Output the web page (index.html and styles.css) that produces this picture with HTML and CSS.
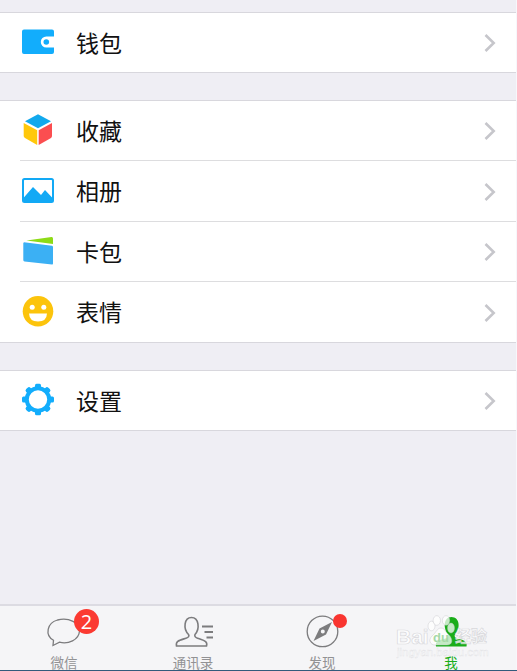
FILE: index.html
```html
<!DOCTYPE html>
<html lang="zh-CN">
<head>
<meta charset="utf-8">
<title>我</title>
<link rel="stylesheet" href="styles.css">
</head>
<body>
<div class="app">
  <main class="settings">
    <section class="group">
      <div class="row">
        <svg class="icon" viewBox="0 0 34 34"><path fill="#12adfc" d="M3 4.500H31Q33 4.500 33 6.500V11.500H25.300a5.500 5.500 0 0 0 0 11H33V27Q33 29 31 29H3Q1 29 1 27V6.500Q1 4.500 3 4.500Z"/><circle cx="25.300" cy="17" r="2.800" fill="#12adfc"/></svg>
        <span class="label">钱包</span>
        <svg class="chevron" viewBox="0 0 12 20"><path d="M1.500 2 9.700 10 1.500 18"/></svg>
      </div>
    </section>
    <section class="group">
      <div class="row">
        <svg class="icon" viewBox="0 0 34 34"><path fill="#12a9ed" d="M17 1.300 30 8.300 17 15.300 4 8.300Z"/><path fill="#ffc80b" d="M2.700 10 16.200 17.300V32L4 25Q2.700 24.200 2.700 23Z"/><path fill="#fb4e50" d="M31 10 17.700 17.300V32L30 25Q31 24.200 31 23Z"/></svg>
        <span class="label">收藏</span>
        <svg class="chevron" viewBox="0 0 12 20"><path d="M1.500 2 9.700 10 1.500 18"/></svg>
      </div>
      <div class="row">
        <svg class="icon" viewBox="0 0 34 34"><rect x="2" y="5" width="30" height="23" rx="1.500" fill="#fff" stroke="#12a9f5" stroke-width="2"/><path fill="#12a9f5" d="M2 24.500 12 13 20 21 24 16 32 24.500V28H2Z"/></svg>
        <span class="label">相册</span>
        <svg class="chevron" viewBox="0 0 12 20"><path d="M1.500 2 9.700 10 1.500 18"/></svg>
      </div>
      <div class="row">
        <svg class="icon" viewBox="0 0 34 34"><path fill="#8edb16" d="M5.500 5.500 30.500 2Q32 1.800 32 3.500V9Z"/><path fill="#3bb0f4" d="M3 7.300 31 10.800Q32 11 32 12V28.500Q32 29.700 31 29.500L3.500 26.500Q2.300 26.300 2.300 25V8Z"/></svg>
        <span class="label">卡包</span>
        <svg class="chevron" viewBox="0 0 12 20"><path d="M1.500 2 9.700 10 1.500 18"/></svg>
      </div>
      <div class="row">
        <svg class="icon" viewBox="0 0 34 34"><circle cx="17" cy="16.300" r="15.300" fill="#fcc40c"/><circle cx="11.200" cy="12.300" r="2.500" fill="#fff"/><circle cx="22.800" cy="12.300" r="2.500" fill="#fff"/><path fill="#fff" d="M8 18.500H26Q25.700 26.500 17 26.500T8 18.500Z"/></svg>
        <span class="label">表情</span>
        <svg class="chevron" viewBox="0 0 12 20"><path d="M1.500 2 9.700 10 1.500 18"/></svg>
      </div>
    </section>
    <section class="group">
      <div class="row">
        <svg class="icon" viewBox="0 0 34 34"><g fill="#12adfc"><rect x="14" y=".8" width="6" height="31.400" rx="1.500"/><rect x="1" y="13.500" width="32" height="6" rx="1.500"/><rect x="14" y=".8" width="6" height="31.400" rx="2" transform="rotate(45 17 16.500)"/><rect x="14" y=".8" width="6" height="31.400" rx="2" transform="rotate(-45 17 16.500)"/></g><circle cx="17" cy="16.500" r="11.200" fill="#fff" stroke="#12adfc" stroke-width="4"/></svg>
        <span class="label">设置</span>
        <svg class="chevron" viewBox="0 0 12 20"><path d="M1.500 2 9.700 10 1.500 18"/></svg>
      </div>
    </section>
  </main>
  <nav class="tabs">
    <div class="tab">
      <svg class="tab-icon" viewBox="0 0 44 36"><path d="M10.500 28.300C1.500 23 4 11 14.500 8C26 5 37 11 36.500 19C36 28 25 32.500 16.500 30.200L10 33.500Z"/></svg>
      <span class="tab-label">微信</span>
      <span class="badge">2</span>
    </div>
    <div class="tab">
      <svg class="tab-icon people" viewBox="0 0 44 36"><path d="M4.500 34H34.500C36 29 32 28.500 25.500 26.200Q22 25 23 22.500C28 17 27 5.500 19.500 5.500S11 17 16.500 22.500Q18 25 14 26.200C7 28.500 3.500 29 4.500 34Z"/><path stroke-width="2" d="M30 14.500H41M32.500 20H41M34.500 25.500H41"/></svg>
      <span class="tab-label">通讯录</span>
    </div>
    <div class="tab">
      <svg class="tab-icon" viewBox="0 0 44 36"><circle cx="21.500" cy="19.400" r="15.300"/><path fill="#7c7c7e" stroke="none" fill-rule="evenodd" d="M31 10 25 22.500 12.500 29 18.500 16.500ZM21.800 17.600a2 2 0 1 0 0 4 2 2 0 0 0 0-4Z"/></svg>
      <span class="tab-label">发现</span>
      <span class="dot"></span>
    </div>
    <div class="tab active">
      <svg class="tab-icon" viewBox="0 0 44 36"><path d="M6 34.500H36.500C37.500 29 34.500 28.500 27.500 26.500Q23.500 25 25 22.500C31 16 29.500 5 21.500 5S13 16 18 22.500Q19.500 25 15.500 26.500C8.500 28.500 5 29 6 34.500Z"/></svg>
      <span class="tab-label">我</span>
    </div>
  </nav>
  <div class="watermark">
    <div class="brand">
      <span class="bai">Bai</span>
      <span class="paw-box"><svg class="paw" viewBox="0 0 28 32"><ellipse cx="4.500" cy="12" rx="3.500" ry="4.800"/><ellipse cx="9.800" cy="6.500" rx="3.700" ry="4.800"/><ellipse cx="19" cy="6.500" rx="3.700" ry="4.800"/><ellipse cx="24" cy="14" rx="3.500" ry="5"/><path d="M14 14C10 14 9 19 5 22C1 26 3 31 8 31H20C26 31 26 25 22 21C18 18 18 14 14 14Z"/></svg><span class="du">du</span></span>
      <span class="jingyan">经验</span>
    </div>
    <div class="site">jingyan.baidu.com</div>
  </div>
</div>
</body>
</html>
```
FILE: styles.css
```css
* { box-sizing: border-box; }
body {
  margin: 0;
  background: #f7f7fb;
  font-family: "Liberation Sans", "Noto Sans CJK SC", sans-serif;
}
.app {
  position: relative;
  display: flex;
  flex-direction: column;
  width: 517px;
  height: 671px;
  overflow: hidden;
  border-bottom: 1px solid #315b7c;
}
.settings {
  flex: 1;
  display: flex;
  flex-direction: column;
  gap: 27px;
  width: 516px;
  padding-top: 12px;
  background: #efeef4;
}
.group {
  background: #fff;
  border-top: 1px solid #d8d7dd;
  border-bottom: 1px solid #d8d7dd;
}
.row {
  display: flex;
  align-items: center;
  height: 59px;
  margin-left: 20px;
  padding: 0 20px 0 1px;
}
.row + .row { height: 61px; border-top: 1px solid #dddddf; }
.row:nth-child(3) { height: 60px; }
.icon { width: 34px; height: 34px; margin-top: -1px; }
.row + .row .icon { margin-top: 0; }
.label {
  flex: 1;
  margin-left: 21px;
  padding-top: 2px;
  color: #111;
  font-size: 23px;
  line-height: 34px;
}
.chevron { width: 12px; height: 20px; margin-top: 1px; }
.chevron path { fill: none; stroke: #c6c6cb; stroke-width: 2.6; }
.tabs {
  display: flex;
  flex-shrink: 0;
  width: 516px;
  height: 66px;
  background: #f5f5f7;
  border-top: 2px solid #dcdbe2;
}
.tab {
  position: relative;
  flex: 1;
  display: flex;
  flex-direction: column;
  align-items: center;
  padding-top: 6px;
  color: #929294;
}
.tab-icon {
  flex-shrink: 0;
  width: 44px;
  height: 36px;
  fill: none;
  stroke: #7c7c7e;
  stroke-width: 1.3;
}
.people { stroke-width: 1.6; }
.tab-label {
  flex-shrink: 0;
  margin: 6px 1px 0 0;
  font-size: 13.5px;
  line-height: 20px;
}
.active { color: #1aad19; }
.active .tab-icon { fill: #1aad19; stroke: none; }
.badge {
  position: absolute;
  left: 74px;
  top: 3px;
  width: 25px;
  height: 25px;
  border-radius: 50%;
  background: #fb3a31;
  color: #fff;
  font: 20px/25px "Open Sans", sans-serif;
  text-align: center;
}
.dot {
  position: absolute;
  left: 75px;
  top: 8px;
  width: 14px;
  height: 14px;
  border-radius: 50%;
  background: #f93530;
}
.watermark {
  position: absolute;
  left: 396px;
  top: 614px;
  width: 100px;
  color: rgba(255, 255, 255, .8);
  white-space: nowrap;
}
.brand {
  display: flex;
  align-items: flex-end;
  height: 33px;
  font-weight: 700;
  -webkit-text-stroke: .7px rgba(205, 205, 209, .75);
}
.bai { width: 31px; font-size: 21px; line-height: 20px; }
.paw-box { position: relative; width: 28px; height: 33px; }
.paw {
  display: block;
  width: 28px;
  height: 32px;
  fill: rgba(255, 255, 255, .75);
  stroke: rgba(190, 190, 194, .55);
  stroke-width: .7;
}
.du {
  position: absolute;
  left: 6px;
  bottom: 2px;
  color: #a5d9a7;
  font-size: 13px;
  line-height: 14px;
  -webkit-text-stroke: 0;
}
.jingyan { font-size: 16px; line-height: 20px; }
.site {
  margin: -1px 0 0 1px;
  font-size: 11.4px;
  line-height: 12px;
  -webkit-text-stroke: .4px rgba(215, 215, 219, .7);
}
```
